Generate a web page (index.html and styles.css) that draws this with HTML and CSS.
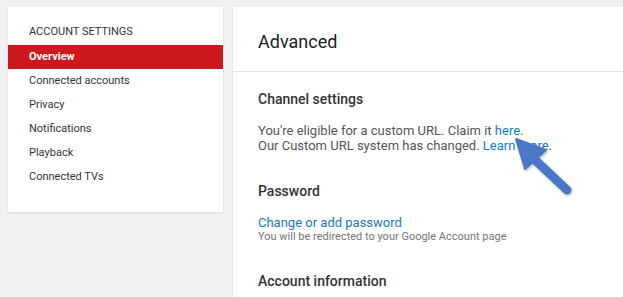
FILE: index.html
```html
<!DOCTYPE html>
<html>
<head>
<meta charset="utf-8">
<link rel="stylesheet" href="styles.css">
</head>
<body>
<div class="page">
  <nav class="sidebar">
    <div class="side-heading">ACCOUNT SETTINGS</div>
    <ul class="side-list">
      <li class="side-item active">Overview</li>
      <li class="side-item">Connected accounts</li>
      <li class="side-item">Privacy</li>
      <li class="side-item">Notifications</li>
      <li class="side-item">Playback</li>
      <li class="side-item">Connected TVs</li>
    </ul>
  </nav>
  <main class="main">
    <header class="main-header"><h1 class="main-title">Advanced</h1></header>
    <div class="content">
      <section class="section">
        <h2 class="section-title">Channel settings</h2>
        <p class="para">You're eligible for a custom URL. Claim it <a class="link">here</a>.<br>Our Custom URL system has changed. <a class="link">Learn more</a>.</p>
      </section>
      <section class="section">
        <h2 class="section-title">Password</h2>
        <a class="link link-block">Change or add password</a>
        <div class="hint">You will be redirected to your Google Account page</div>
      </section>
      <section class="section">
        <h2 class="section-title">Account information</h2>
      </section>
    </div>
  </main>
</div>
<svg class="arrow" width="80" height="80" viewBox="505 125 80 80" xmlns="http://www.w3.org/2000/svg">
  <defs>
    <filter id="sh" x="-20%" y="-20%" width="140%" height="140%">
      <feDropShadow dx="1" dy="1.5" stdDeviation="1" flood-color="#000" flood-opacity="0.25"/>
    </filter>
  </defs>
  <g filter="url(#sh)" fill="#4a78c9" stroke="#4a78c9">
    <line x1="533" y1="158" x2="567" y2="190" stroke-width="9" stroke-linecap="round"/>
    <polygon points="516,139 525,169 546,150" stroke-width="2" stroke-linejoin="round"/>
  </g>
</svg>
</body>
</html>
```
FILE: styles.css
```css
html, body {
  margin: 0;
  padding: 0;
  height: 100%;
  overflow: hidden;
  background: #f1f1f1;
  font-family: Roboto, "Liberation Sans", Arial, sans-serif;
}
.page {
  display: flex;
  align-items: flex-start;
  gap: 10px;
  padding: 7px 0 0 8px;
}
.sidebar {
  flex: 0 0 215px;
  height: 205px;
  box-sizing: border-box;
  background: #fff;
  box-shadow: 0 1px 2px rgba(0,0,0,0.1);
  padding-top: 13px;
}
.side-heading {
  font-size: 11px;
  line-height: 24px;
  color: #333;
  padding-left: 21px;
  margin-bottom: 1px;
}
.side-list {
  list-style: none;
  margin: 0;
  padding: 0;
}
.side-item {
  height: 24px;
  line-height: 24px;
  font-size: 11px;
  color: #333;
  padding-left: 21px;
}
.side-item.active {
  background: #cc181e;
  color: #fff;
  font-weight: 700;
}
.main {
  flex: 0 0 420px;
  height: 320px;
  background: #fff;
  box-shadow: 0 1px 2px rgba(0,0,0,0.1);
}
.main-header {
  height: 65px;
  box-sizing: border-box;
  border-bottom: 1px solid #e2e2e2;
  padding: 23px 25px 0;
}
.main-title {
  margin: 0;
  font-size: 18px;
  line-height: 24px;
  font-weight: 400;
  color: #222;
}
.content {
  padding: 18px 25px 0;
  display: flex;
  flex-direction: column;
  gap: 29px;
}
.section-title {
  margin: 0 0 15px;
  font-size: 14px;
  line-height: 18px;
  font-weight: 500;
  color: #333;
}
.para {
  margin: 0;
  font-size: 13px;
  line-height: 15px;
  color: #555;
}
.link {
  color: #167ac6;
  text-decoration: none;
}
.link-block {
  display: block;
  font-size: 13px;
  line-height: 16px;
}
.hint {
  font-size: 11px;
  line-height: 12px;
  color: #767676;
}
.arrow {
  position: absolute;
  left: 505px;
  top: 125px;
}
```
